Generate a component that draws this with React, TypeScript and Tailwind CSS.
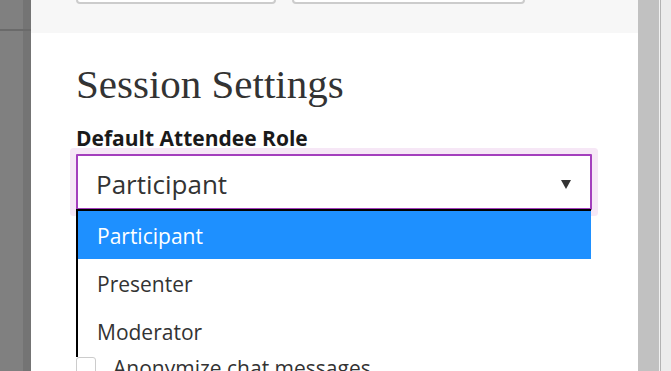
const ROLES = ["Participant", "Presenter", "Moderator"];

const sans = "font-['Open_Sans',_'Noto_Sans',_sans-serif]";

export default function App() {
  const selected = "Participant";

  return (
    <div className={`relative flex h-[371px] w-[671px] overflow-hidden bg-white ${sans}`}>
      {/* dimmed page behind the dialog */}
      <div className="flex w-[31px] shrink-0 flex-col">
        <div className="flex h-[29px]">
          <div className="w-[23px] bg-[#808080]" />
          <div className="flex-1 bg-[#747474]" />
        </div>
        <div className="h-[2px] bg-[#6a6a6a]" />
        <div className="flex flex-1">
          <div className="w-[23px] bg-[#808080]" />
          <div className="flex-1 bg-[#747474]" />
        </div>
      </div>

      {/* settings panel */}
      <div className="flex w-[607px] shrink-0 flex-col bg-white">
        <div className="flex h-[33px] shrink-0 gap-[16px] overflow-hidden bg-[#f7f7f7] pl-[45px] pr-[2px]">
          <div className="-mt-[40px] h-[44px] w-[200px] rounded-[4px] border-2 border-[#cccccc] bg-white" />
          <div className="-mt-[40px] h-[44px] w-[233px] rounded-[4px] border-2 border-[#cccccc] bg-white" />
        </div>
        <div className="mr-[2px] h-[2px] bg-[#cccccc]" />

        <div className="flex flex-col pl-[45px] pr-[46px]">
          <h2 className="mt-[28px] font-['Liberation_Serif',_serif] text-[41px] leading-[46px] text-[#333333]">
            Session Settings
          </h2>
          <label className="mt-[18px] text-[21px] font-bold leading-[26px] text-[#1a1a1a]">
            Default Attendee Role
          </label>
          <div className="mt-[3px] flex h-[56px] items-center justify-between border-2 border-[#a43fbd] bg-white pl-[18px] pr-[19px] shadow-[0_0_0_6px_#f6e7f6] [border-radius:1px]">
            <span className="pt-[3px] text-[26px] leading-[30px] text-[#333333]">{selected}</span>
            <svg width="10" height="9" viewBox="0 0 10 9" className="mt-[4px]">
              <polygon points="0,0 10,0 5,9" fill="#333333" />
            </svg>
          </div>

          <div className="mt-[142px] flex items-center gap-[17px]">
            <div className="h-[20px] w-[20px] shrink-0 rounded-[3px] border border-[#cccccc] bg-white" />
            <span className="pt-[2px] text-[21px] leading-[28px] text-[#333333]">Anonymize chat messages</span>
          </div>
        </div>
      </div>

      {/* scrollbar */}
      <div className="w-[21px] shrink-0 bg-[#c1c1c1]" />
      <div className="w-[1px] shrink-0 bg-[#f2f2f2]" />
      <div className="w-[1px] shrink-0 bg-[#b3b3b3]" />
      <div className="flex-1 bg-[#ececec]" />

      {/* open native dropdown list */}
      <div className="absolute left-[76px] top-[209px] flex w-[515px] flex-col border-l-2 border-t-2 border-black bg-white pb-[2px]">
        {ROLES.map((role) => (
          <div
            key={role}
            className={
              role === selected
                ? "flex h-[48px] items-center bg-[#1e90ff] pl-[19px] pt-[4px] text-[21px] text-white"
                : "flex h-[48px] items-center pl-[19px] pt-[4px] text-[21px] text-[#333333]"
            }
          >
            {role}
          </div>
        ))}
      </div>
    </div>
  );
}
